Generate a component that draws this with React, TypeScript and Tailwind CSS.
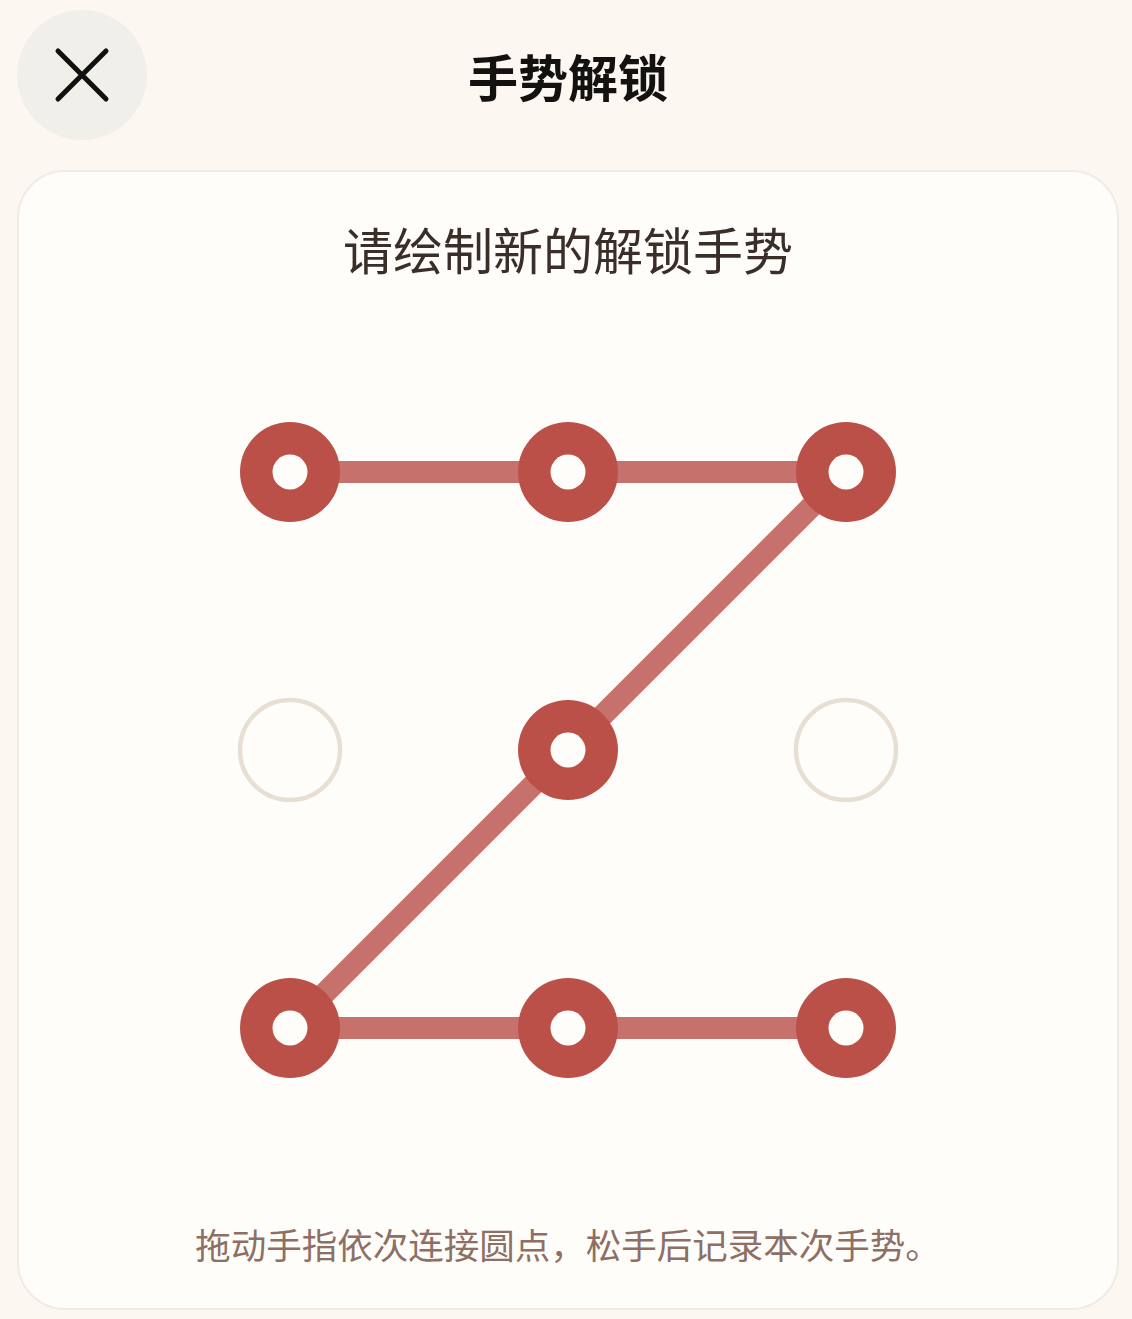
import React from "react";

const pts: [number, number][] = [
  [82, 82], [360, 82], [638, 82],
  [82, 360], [360, 360], [638, 360],
  [82, 638], [360, 638], [638, 638],
];
const path = [0, 1, 2, 4, 6, 7, 8];

function Pattern() {
  const d = path.map((i, k) => `${k === 0 ? "M" : "L"}${pts[i][0]} ${pts[i][1]}`).join(" ");
  return (
    <svg width="720" height="720" viewBox="0 0 720 720" className="block">
      <path d={d} fill="none" stroke="#c6716b" strokeWidth="22" strokeLinejoin="miter" />
      {pts.map(([x, y], i) =>
        path.includes(i) ? (
          <g key={i}>
            <circle cx={x} cy={y} r="50" fill="#bb5049" />
            <circle cx={x} cy={y} r="17.5" fill="#fffdf9" />
          </g>
        ) : (
          <circle key={i} cx={x} cy={y} r="50" fill="none" stroke="#e8dfd4" strokeWidth="4.5" />
        )
      )}
    </svg>
  );
}

export default function App() {
  return (
    <div
      className="min-h-[1319px] w-full bg-[#fcf7f1] pl-[17px] pr-[13px] pt-[10px] pb-[9px]"
      style={{ fontFamily: '"Noto Sans CJK SC", "Noto Sans", sans-serif' }}
    >
      <div className="flex items-center">
        <button className="flex h-[130px] w-[130px] shrink-0 items-center justify-center rounded-full bg-[#f1efea]">
          <svg width="130" height="130" viewBox="0 0 130 130">
            <path d="M41 41 L89 89 M89 41 L41 89" stroke="#111" strokeWidth="5" strokeLinecap="round" />
          </svg>
        </button>
        <div className="flex-1 text-center text-[50px] font-bold leading-none text-[#141210]">手势解锁</div>
        <div className="w-[130px] shrink-0" />
      </div>
      <div className="mt-[30px] flex h-[1140px] flex-col items-center rounded-[48px] border-2 border-[#f0ebe4] bg-[#fffdf9] pt-[39px]">
        <div className="text-[50px] leading-[75px] text-[#3a2e29]">请绘制新的解锁手势</div>
        <div className="mt-[104px]">
          <Pattern />
        </div>
        <div className="mt-[108px] text-[35.5px] leading-[52px] text-[#8d6f64]">
          拖动手指依次连接圆点，松手后记录本次手势。
        </div>
      </div>
    </div>
  );
}
